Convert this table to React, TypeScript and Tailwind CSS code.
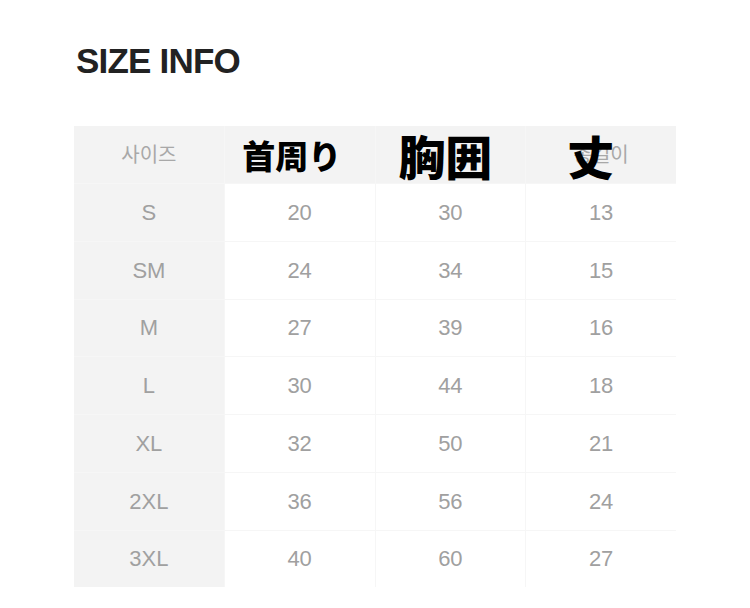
import React from "react";

const rows: [string, string, string, string][] = [
  ["S", "20", "30", "13"],
  ["SM", "24", "34", "15"],
  ["M", "27", "39", "16"],
  ["L", "30", "44", "18"],
  ["XL", "32", "50", "21"],
  ["2XL", "36", "56", "24"],
  ["3XL", "40", "60", "27"],
];

const jp = { fontFamily: '"Noto Sans CJK JP", "Noto Sans", sans-serif' };
const kr = { fontFamily: '"Liberation Sans", "Noto Sans CJK KR", sans-serif' };

export default function App() {
  return (
    <div className="w-[750px] h-[608px] bg-white overflow-hidden" style={kr}>
      <div className="pt-[43px] pl-[76px]">
        <h1 className="text-[35px] leading-[35px] font-bold tracking-[-0.8px] text-[#222222]">
          SIZE INFO
        </h1>
      </div>
      <div className="mt-[48px] ml-[74px] w-[602px] grid grid-cols-4 bg-[#f6f6f6] gap-px">
        {/* header */}
        <div className="h-[57px] bg-[#f3f3f3] flex items-center justify-center text-[20px] text-[#a8a8a8]">
          사이즈
        </div>
        <div className="h-[57px] bg-[#f3f3f3] flex items-center justify-center pr-[16px] pt-[1px]">
          <span className="text-[33px] leading-none font-black text-black" style={jp}>
            首周り
          </span>
        </div>
        <div className="h-[57px] bg-[#f3f3f3] flex items-center justify-center pr-[10px]">
          <span className="text-[47px] leading-none font-black text-black" style={jp}>
            胸囲
          </span>
        </div>
        <div className="relative h-[57px] bg-[#f3f3f3] flex items-center justify-center text-[20px] text-[#a8a8a8]">
          총길이
          <span
            className="absolute left-[41px] top-[5px] text-[47px] leading-none font-black text-black"
            style={jp}
          >
            丈
          </span>
        </div>
        {rows.map((r) => (
          <React.Fragment key={r[0]}>
            <div className="h-[56.75px] bg-[#f3f3f3] flex items-center justify-center text-[22px] text-[#a0a0a0]">
              {r[0]}
            </div>
            {r.slice(1).map((v, i) => (
              <div
                key={i}
                className="h-[56.75px] bg-white flex items-center justify-center text-[22px] text-[#a0a0a0]"
              >
                {v}
              </div>
            ))}
          </React.Fragment>
        ))}
      </div>
    </div>
  );
}
